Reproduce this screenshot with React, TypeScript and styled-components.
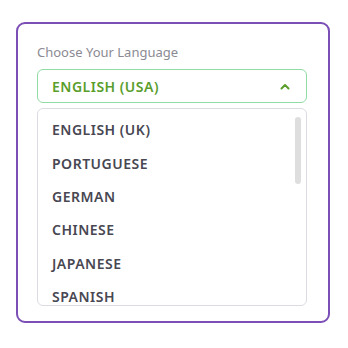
import React, { useState } from "react";
import styled, { createGlobalStyle } from "styled-components";

const GlobalStyle = createGlobalStyle`
  body {
    margin: 0;
    background: #ffffff;
    font-family: "Noto Sans", "Open Sans", sans-serif;
  }
`;

const Page = styled.div`
  padding: 22px 0 0 16px;
`;

const Card = styled.div`
  box-sizing: border-box;
  width: 314px;
  height: 301px;
  border: 2px solid #7b4fb6;
  border-radius: 9px;
  padding: 19px 19px 0;
`;

const Label = styled.div`
  font-size: 13px;
  line-height: 18px;
  color: #8b8a93;
  margin-bottom: 8px;
`;

const SelectBox = styled.div`
  box-sizing: border-box;
  width: 270px;
  height: 34px;
  border: 1px solid #93dba5;
  border-radius: 6px;
  display: flex;
  align-items: center;
  justify-content: space-between;
  padding: 0 16px 0 14px;
  font-size: 14px;
  font-weight: 600;
  letter-spacing: 0.5px;
  color: #5a9e2c;
  cursor: pointer;
`;

const ListWrap = styled.div`
  position: relative;
  box-sizing: border-box;
  width: 270px;
  height: 198px;
  margin-top: 5px;
  border: 1px solid #dcdbe3;
  border-radius: 6px;
  overflow: hidden;
`;

const Options = styled.ul`
  margin: 0;
  padding: 4px 0 0;
  list-style: none;
`;

const Option = styled.li<{ $active?: boolean }>`
  height: 33.4px;
  display: flex;
  align-items: center;
  padding-left: 14px;
  font-size: 14px;
  font-weight: 600;
  letter-spacing: 0.5px;
  color: ${(p) => (p.$active ? "#5a9e2c" : "#484752")};
  cursor: pointer;
`;

const Thumb = styled.div`
  position: absolute;
  top: 8px;
  right: 5px;
  width: 6px;
  height: 67px;
  border-radius: 3px;
  background: #dedede;
`;

const Chevron = () => (
  <svg width="10" height="7" viewBox="0 0 10 7" fill="none">
    <path d="M1.5 5.5 L5 2 L8.5 5.5" stroke="#5a9e2c" strokeWidth="2" strokeLinecap="round" strokeLinejoin="round" />
  </svg>
);

const languages = ["ENGLISH (UK)", "PORTUGUESE", "GERMAN", "CHINESE", "JAPANESE", "SPANISH"];

export default function App() {
  const [selected, setSelected] = useState("ENGLISH (USA)");
  const [open, setOpen] = useState(true);

  return (
    <Page>
      <GlobalStyle />
      <Card>
        <Label>Choose Your Language</Label>
        <SelectBox onClick={() => setOpen(!open)}>
          <span>{selected}</span>
          <Chevron />
        </SelectBox>
        {open && (
          <ListWrap>
            <Options>
              {languages.map((lang) => (
                <Option key={lang} onClick={() => setSelected(lang)}>
                  {lang}
                </Option>
              ))}
            </Options>
            <Thumb />
          </ListWrap>
        )}
      </Card>
    </Page>
  );
}
